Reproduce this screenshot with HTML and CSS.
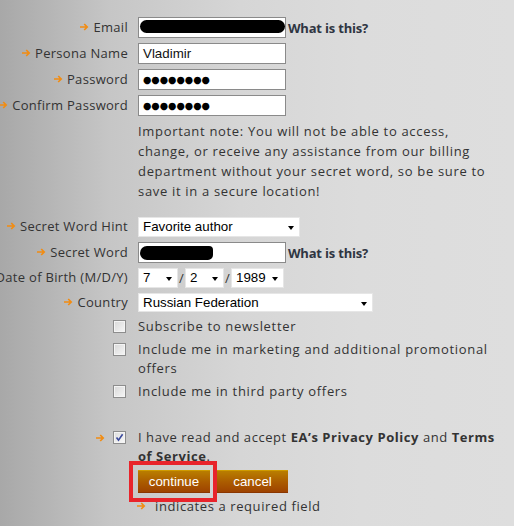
FILE: index.html
```html
<!DOCTYPE html>
<html>
<head>
<meta charset="utf-8">
<link rel="stylesheet" href="styles.css">
</head>
<body>
<form class="form">
  <div class="row">
    <div class="label"><svg class="arrow" width="9" height="8" viewBox="0 0 9 8"><path d="M0 4h7.2M4.2 1l3 3-3 3" stroke="#f28c12" stroke-width="1.7" fill="none"/></svg>Email</div>
    <div class="field"><div class="input"><span class="redact redact-email"></span></div><a class="help">What is this?</a></div>
  </div>
  <div class="row">
    <div class="label"><svg class="arrow" width="9" height="8" viewBox="0 0 9 8"><path d="M0 4h7.2M4.2 1l3 3-3 3" stroke="#f28c12" stroke-width="1.7" fill="none"/></svg>Persona Name</div>
    <div class="field"><div class="input">Vladimir</div></div>
  </div>
  <div class="row">
    <div class="label"><svg class="arrow" width="9" height="8" viewBox="0 0 9 8"><path d="M0 4h7.2M4.2 1l3 3-3 3" stroke="#f28c12" stroke-width="1.7" fill="none"/></svg>Password</div>
    <div class="field"><div class="input dots">●●●●●●●●</div></div>
  </div>
  <div class="row">
    <div class="label"><svg class="arrow" width="9" height="8" viewBox="0 0 9 8"><path d="M0 4h7.2M4.2 1l3 3-3 3" stroke="#f28c12" stroke-width="1.7" fill="none"/></svg>Confirm Password</div>
    <div class="field"><div class="input dots">●●●●●●●●</div></div>
  </div>

  <p class="note">Important note: You will not be able to access, change, or receive any assistance from our billing department without your secret word, so be sure to save it in a secure location!</p>

  <div class="row row-sel">
    <div class="label"><svg class="arrow" width="9" height="8" viewBox="0 0 9 8"><path d="M0 4h7.2M4.2 1l3 3-3 3" stroke="#f28c12" stroke-width="1.7" fill="none"/></svg>Secret Word Hint</div>
    <div class="field"><div class="select sel-hint">Favorite author</div></div>
  </div>
  <div class="row">
    <div class="label"><svg class="arrow" width="9" height="8" viewBox="0 0 9 8"><path d="M0 4h7.2M4.2 1l3 3-3 3" stroke="#f28c12" stroke-width="1.7" fill="none"/></svg>Secret Word</div>
    <div class="field"><div class="input"><span class="redact redact-word"></span></div><a class="help">What is this?</a></div>
  </div>
  <div class="row row-dob">
    <div class="label">Date of Birth (M/D/Y)</div>
    <div class="field"><div class="select sel-m">7</div><span class="slash">/</span><div class="select sel-d">2</div><span class="slash">/</span><div class="select sel-y">1989</div></div>
  </div>
  <div class="row row-country">
    <div class="label"><svg class="arrow" width="9" height="8" viewBox="0 0 9 8"><path d="M0 4h7.2M4.2 1l3 3-3 3" stroke="#f28c12" stroke-width="1.7" fill="none"/></svg>Country</div>
    <div class="field"><div class="select sel-country">Russian Federation</div></div>
  </div>

  <div class="checks">
    <div class="check-row">
      <div class="label"><span class="box"></span></div>
      <div class="check-text">Subscribe to newsletter</div>
    </div>
    <div class="check-row">
      <div class="label"><span class="box"></span></div>
      <div class="check-text">Include me in marketing and additional promotional offers</div>
    </div>
    <div class="check-row">
      <div class="label"><span class="box"></span></div>
      <div class="check-text">Include me in third party offers</div>
    </div>
  </div>

  <div class="check-row terms">
    <div class="label"><svg class="arrow arrow-terms" width="9" height="8" viewBox="0 0 9 8"><path d="M0 4h7.2M4.2 1l3 3-3 3" stroke="#f28c12" stroke-width="1.7" fill="none"/></svg><span class="box checked"><svg width="11" height="11" viewBox="0 0 11 11"><path d="M2.5 5.5l2 2.6L8.6 2.2" stroke="#3b4a9c" stroke-width="1.6" fill="none"/></svg></span></div>
    <div class="check-text">I have read and accept <b>EA’s Privacy Policy</b> and <b>Terms of Service</b>.</div>
  </div>

  <div class="buttons">
    <span class="btn-wrap"><button type="button" class="btn btn-continue">continue</button><span class="highlight"></span></span>
    <button type="button" class="btn btn-cancel">cancel</button>
  </div>

  <div class="required"><svg class="arrow" width="9" height="8" viewBox="0 0 9 8"><path d="M0 4h7.2M4.2 1l3 3-3 3" stroke="#f28c12" stroke-width="1.7" fill="none"/></svg><span>indicates a required field</span></div>
</form>
</body>
</html>
```

FILE: styles.css
```css
html, body {
  margin: 0;
  padding: 0;
}
body {
  width: 514px;
  height: 526px;
  overflow: hidden;
  background: linear-gradient(to right, #a8a8a8 0px, #c6c6c6 110px, #d6d6d6 240px, #dcdcdc 360px, #dedede 514px);
  font-family: "Open Sans", "DejaVu Sans", sans-serif;
  font-size: 13px;
  color: #333333;
}
.form {
  padding-top: 17px;
  margin: 0;
}
.row {
  display: flex;
  align-items: center;
  height: 21px;
  margin-bottom: 5px;
}
.label {
  width: 128px;
  flex: none;
  display: flex;
  justify-content: flex-end;
  align-items: center;
  white-space: nowrap;
  margin-right: 10px;
  color: #333;
  letter-spacing: 0.3px;
}
.row > .label {
  padding-bottom: 2px;
}
.arrow {
  flex: none;
  margin-right: 4px;
}
.field {
  display: flex;
  align-items: center;
}
.input {
  box-sizing: border-box;
  width: 148px;
  height: 21px;
  background: #fff;
  border: 1px solid #8a8a8a;
  font-family: "Liberation Sans", Arial, sans-serif;
  font-size: 13.33px;
  color: #111;
  padding: 0 0 0 4px;
  line-height: 19px;
  position: relative;
}
.dots {
  font-family: "DejaVu Sans", sans-serif;
  font-size: 9.6px;
  padding-left: 4px;
  color: #000;
}
.redact {
  display: block;
  background: #000;
  position: absolute;
}
.redact-email {
  left: 1px;
  top: 2px;
  width: 145px;
  height: 13px;
  border-radius: 7px;
}
.redact-word {
  left: 1px;
  top: 3px;
  width: 73px;
  height: 14px;
  border-radius: 7px 4px 5px 7px;
}
.help {
  margin-left: 2px;
  font-weight: 700;
  color: #2f3542;
  font-size: 13px;
  letter-spacing: -0.2px;
}
.note {
  margin: 0 0 16px 138px;
  width: 348px;
  line-height: 20px;
  color: #333;
  letter-spacing: 0.68px;
}
.select {
  box-sizing: border-box;
  height: 20px;
  background: #fff;
  border: 1px solid #e6e6e6;
  font-family: "Liberation Sans", Arial, sans-serif;
  font-size: 13.33px;
  color: #000;
  padding-left: 4px;
  line-height: 18px;
  position: relative;
}
.select::after {
  content: "";
  position: absolute;
  right: 5px;
  top: 8px;
  border-left: 3.5px solid transparent;
  border-right: 3.5px solid transparent;
  border-top: 4px solid #000;
}
.row-sel .select, .row-sel {
  height: 20px;
}
.row-sel { margin-bottom: 5px; }
.sel-hint { width: 162px; }
.row-dob {
  height: 20px;
  margin-bottom: 5px;
}
.sel-m { width: 40px; }
.sel-d { width: 39px; }
.sel-y { width: 53px; }
.slash {
  width: 7px;
  text-align: center;
  color: #333;
}
.row-country {
  height: 19px;
  margin-bottom: 5px;
}
.sel-country {
  width: 235px;
  height: 19px;
  line-height: 17px;
}
.checks {
  display: flex;
  flex-direction: column;
  gap: 4px;
}
.check-row {
  display: flex;
  align-items: flex-start;
}
.check-row .label {
  height: 19px;
}
.check-text {
  width: 362px;
  line-height: 19px;
  color: #333;
  letter-spacing: 0.68px;
}
.terms .check-text {
  letter-spacing: 0.55px;
}
.box {
  box-sizing: border-box;
  width: 13px;
  height: 13px;
  border: 1px solid #8d8d8d;
  background: linear-gradient(135deg, #d8d8d8, #f6f6f6);
  box-shadow: inset 0 0 0 1px #f4f4f4;
  margin-right: 2px;
  display: flex;
  align-items: center;
  justify-content: center;
}
.box.checked {
  background: linear-gradient(135deg, #dcdcdc, #fafafa);
}
.terms {
  margin-top: 27px;
}
.arrow-terms {
  margin-right: 8px;
}
.buttons {
  display: flex;
  margin: 4px 0 0 138px;
  height: 23px;
}
.btn-wrap {
  position: relative;
  display: flex;
}
.btn {
  height: 23px;
  border: 0;
  border-top: 1px solid #cf9a00;
  border-bottom: 1px solid #8a3600;
  padding: 0;
  background: linear-gradient(to bottom, #b97e00 0%, #aa5a00 55%, #9e4300 100%);
  color: #fff;
  font-family: "Liberation Sans", Arial, sans-serif;
  font-size: 13.33px;
}
.btn-continue {
  width: 72px;
}
.btn-cancel {
  width: 71px;
  margin-left: 7px;
}
.highlight {
  position: absolute;
  left: -9px;
  top: -9px;
  width: 80px;
  height: 33px;
  border: 4px solid #e8242b;
}
.required {
  display: flex;
  align-items: center;
  margin: 4px 0 0 137px;
  line-height: 18px;
  letter-spacing: 0.6px;
}
.required .arrow {
  margin-right: 9px;
}
```
